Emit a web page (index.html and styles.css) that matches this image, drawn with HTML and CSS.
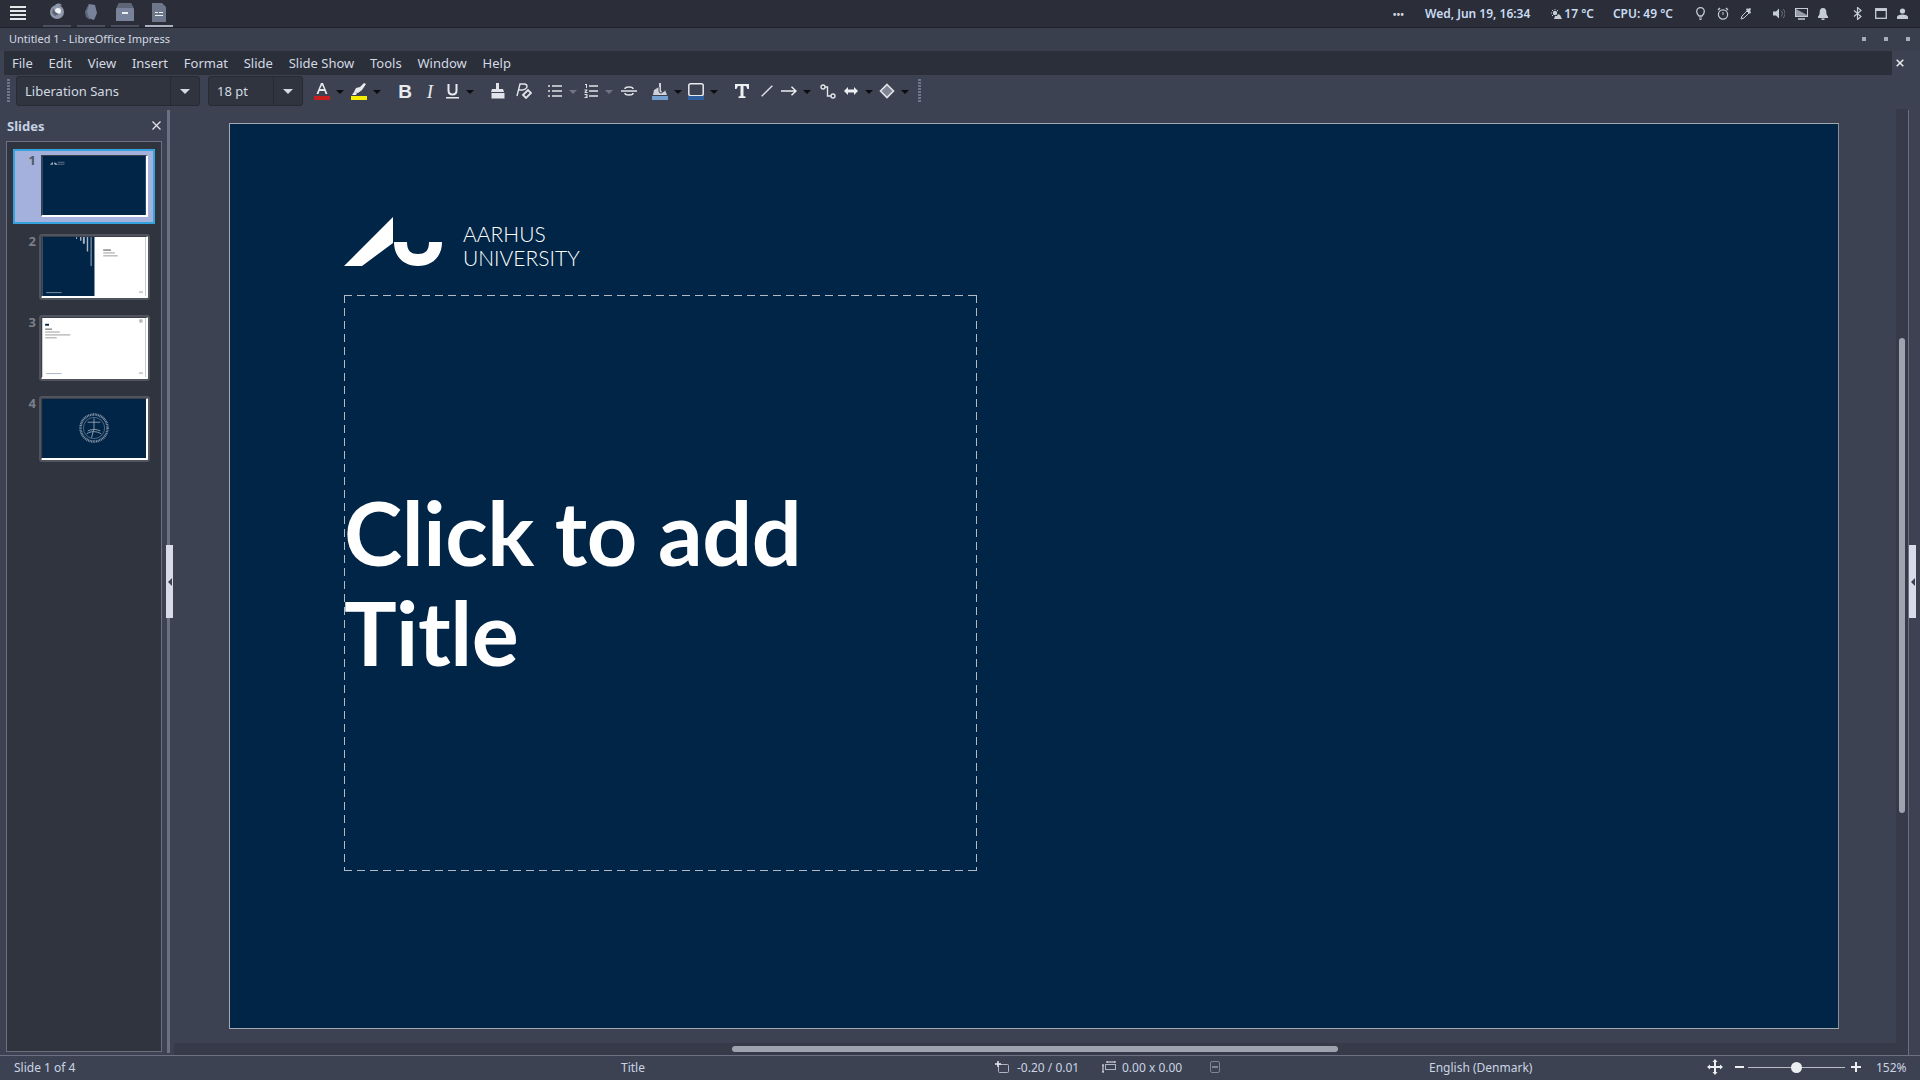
FILE: index.html
```html
<!DOCTYPE html>
<html lang="en">
<head>
    <meta charset="UTF-8">
    <title>Untitled 1 - LibreOffice Impress</title>
    <link rel="stylesheet" href="styles.css">
</head>
<body>
    <header class="topbar">
        <svg class="burger" width="16" height="14" viewBox="0 0 16 14"><path d="M0 1h16M0 5h16M0 9h16M0 13h16" stroke="#e4e6ea" stroke-width="2"/></svg>
        <div class="task">
            <svg width="16" height="16" viewBox="0 0 16 16"><circle cx="8" cy="9" r="7" fill="#8f98ab"/><path d="M6 2c3-2 6-2 7 1-2-1-3 0-4 1z" fill="#8f98ab"/><circle cx="9" cy="8" r="3" fill="#f2f3f5"/><path d="M4 5c1 3 3 5 6 6l-4 2-3-3z" fill="#5d6577"/></svg>
        </div>
        <div class="task">
            <svg width="14" height="18" viewBox="0 0 14 18"><path d="M5 1l6 1 2 8-3 7-6-2-3-6z" fill="#78829a"/><path d="M5 1L3 9l3 8-4-3-1-4z" fill="#5d6577"/></svg>
        </div>
        <div class="task">
            <svg width="18" height="18" viewBox="0 0 18 18"><path d="M3 0h12l3 6v12H0V6z" fill="#78829a"/><path d="M3 0h12l2 5H1z" fill="#5d6577"/><rect x="6" y="9" width="6" height="2" fill="#eceef1"/></svg>
        </div>
        <div class="task task-active">
            <svg width="14" height="19" viewBox="0 0 14 19"><path d="M0 0h10l4 4v15H0z" fill="#6d768b"/><rect x="3" y="9" width="3" height="1" fill="#eceef1"/><rect x="3" y="12" width="8" height="1" fill="#eceef1"/><rect x="7" y="9" width="4" height="1" fill="#eceef1"/></svg>
        </div>
        <div class="tray">
            <span class="tray-dots">&#8226;&#8226;&#8226;</span>
            <span class="tray-date">Wed, Jun 19, 16:34</span>
            <span class="tray-temp">
                <svg width="11" height="10" viewBox="0 0 11 10"><circle cx="4" cy="4" r="2.200" fill="#c5ccd8"/><path d="M4 0v1M0 4h1M1 1l1 1M7 1L6 2M1 7l1-1" stroke="#c5ccd8"/><path d="M3 10l1-3h2l1-2 2 1 2 4z" fill="#c5ccd8"/></svg>17 °C
            </span>
            <span class="tray-cpu">CPU: 49 °C</span>
            <svg class="tray-bulb" width="9" height="13" viewBox="0 0 9 13"><path d="M3 9C1 7 .7 6 .7 4.500a3.800 3.800 0 0 1 7.600 0C8.300 6 8 7 6 9z" fill="none" stroke="#c5ccd8" stroke-width="1.300"/><path d="M3 11h3M3.500 12.500h2" stroke="#c5ccd8"/></svg>
            <svg class="tray-alarm" width="12" height="13" viewBox="0 0 12 13"><circle cx="6" cy="7.500" r="4.600" fill="none" stroke="#c5ccd8" stroke-width="1.200"/><path d="M1 3l2-2M11 3L9 1" stroke="#c5ccd8" stroke-width="1.400"/><path d="M6 5v3" stroke="#c5ccd8"/></svg>
            <svg class="tray-dropper" width="12" height="12" viewBox="0 0 12 12"><path d="M1 11l1-3 5-5 2 2-5 5z" fill="none" stroke="#c5ccd8"/><path d="M6 2l4 4 1-2-1-1 1-2-1-1-2 1-1-1z" fill="#c5ccd8"/></svg>
            <svg class="tray-speaker" width="12" height="11" viewBox="0 0 12 11"><path d="M0 3.500h3L6 .5v10l-3-3H0z" fill="#c5ccd8"/><path d="M8 2.500a4 4 0 0 1 0 6M10 1a6 6 0 0 1 0 9" fill="none" stroke="#6b7280"/></svg>
            <svg class="tray-screen" width="13" height="12" viewBox="0 0 13 12"><rect x=".5" y=".5" width="12" height="8" fill="none" stroke="#c5ccd8"/><path d="M1 1l11 6v1H1z" fill="#c5ccd8" opacity=".7"/><path d="M3 11h7" stroke="#c5ccd8" stroke-width="1.500"/></svg>
            <svg class="tray-bell" width="10" height="12" viewBox="0 0 10 12"><path d="M5 0c2.500 0 3.300 2 3.300 4 0 2.500.7 3.500 1.700 4.500V10H0V8.500C1 7.500 1.700 6.500 1.700 4 1.700 2 2.500 0 5 0z" fill="#c5ccd8"/><rect x="3.500" y="10.500" width="3" height="1.500" fill="#c5ccd8"/></svg>
            <svg class="tray-bt" width="9" height="13" viewBox="0 0 9 13"><path d="M1 3.500l7 6-3.500 3V.5L8 3.500l-7 6" fill="none" stroke="#c5ccd8" stroke-width="1.200"/></svg>
            <svg class="tray-window" width="12" height="11" viewBox="0 0 12 11"><rect x=".7" y=".7" width="10.600" height="9.600" fill="none" stroke="#c5ccd8" stroke-width="1.300"/><rect x="1" y="1" width="10" height="2" fill="#c5ccd8"/></svg>
            <svg class="tray-user" width="11" height="11" viewBox="0 0 11 11"><circle cx="5.500" cy="3" r="2.600" fill="#c5ccd8"/><path d="M0 11V9c0-1.500 2.500-2.500 5.500-2.500S11 7.500 11 9v2z" fill="#c5ccd8"/></svg>
        </div>
    </header>

    <div class="titlebar">
        <span class="title-text">Untitled 1 - LibreOffice Impress</span>
        <i class="win-dot"></i>
        <i class="win-dot"></i>
        <i class="win-dot"></i>
    </div>

    <div class="menurow">
        <nav class="menubar">
            <span>File</span>
            <span>Edit</span>
            <span>View</span>
            <span>Insert</span>
            <span>Format</span>
            <span>Slide</span>
            <span>Slide Show</span>
            <span>Tools</span>
            <span>Window</span>
            <span>Help</span>
        </nav>
        <svg class="menu-close" width="8" height="8" viewBox="0 0 8 8"><path d="M.7.7l6.600 6.600M7.300.7L.7 7.300" stroke="#e4e6ea" stroke-width="1.600"/></svg>
    </div>

    <div class="toolbar">
        <i class="grip"></i>
        <div class="combo combo-font"><span class="combo-value">Liberation Sans</span><span class="combo-arrow"></span></div>
        <div class="combo combo-size"><span class="combo-value">18 pt</span><span class="combo-arrow"></span></div>

        <span class="tool ml-8">
            <svg width="16" height="19" viewBox="0 0 16 19"><path d="M2.500 12L7 1h2l4.500 11h-2l-1-3h-5l-1 3zM6 7h4L8 3z" fill="#e8eaee"/><rect y="14" width="16" height="4" fill="#c5201f"/></svg>
        </span>
        <span class="drop"></span>
        <span class="tool ml-1">
            <svg width="16" height="19" viewBox="0 0 16 19"><path d="M3 10l2-4 4-1 2 3-4 3zM9 5l4-4 2 1-4 6zM1 13l2-3 3 1-1 2z" fill="#e8eaee"/><rect y="14" width="16" height="4" fill="#f5ee00"/></svg>
        </span>
        <span class="drop"></span>

        <span class="tool ml-10"><b class="glyph glyph-b">B</b></span>
        <span class="tool ml-3"><i class="glyph glyph-i">I</i></span>
        <span class="tool">
            <svg width="13" height="16" viewBox="0 0 13 16"><path d="M2.500 1v6.500c0 2.500 1.500 4 4 4s4-1.500 4-4V1" fill="none" stroke="#e8eaee" stroke-width="2"/><rect x="0" y="14" width="13" height="1.500" fill="#e8eaee"/></svg>
        </span>
        <span class="drop"></span>

        <span class="tool ml-10">
            <svg width="14" height="16" viewBox="0 0 14 16"><path d="M5 0h3v6h4l1 3H0l1-3h4zM.5 10h13v5.500H.5z" fill="#e2e4e9"/></svg>
        </span>
        <span class="tool ml-4">
            <svg width="16" height="16" viewBox="0 0 16 16"><path d="M1 13L4 1h4c2 0 3 1 3 2.500S9 7 6 7H3" fill="none" stroke="#e2e4e9" stroke-width="1.400"/><path d="M7 12l5-5 3 3-5 5z" fill="none" stroke="#e2e4e9" stroke-width="1.800"/></svg>
        </span>

        <span class="tool ml-9">
            <svg width="14" height="12" viewBox="0 0 14 12"><path d="M0 1h2M0 6h2M0 11h2M4 1h10M4 6h10M4 11h10" stroke="#e2e4e9" stroke-width="1.600"/></svg>
        </span>
        <span class="drop drop-off"></span>
        <span class="tool">
            <svg width="14" height="14" viewBox="0 0 14 14"><path d="M5 2h9M5 7h9M5 12h9" stroke="#e2e4e9" stroke-width="1.600"/><path d="M1 0h2v4H2V1H1zM.5 5.500h3v.8L2 8h1.500v1h-3v-.8L2 6.500H.5zM.5 10h3v4h-3v-1h2v-.5h-1v-.8h1v-.7h-2z" fill="#e2e4e9"/></svg>
        </span>
        <span class="drop drop-off"></span>
        <span class="tool ml-2">
            <svg width="16" height="10" viewBox="0 0 16 10"><path d="M0 5h16" stroke="#e2e4e9" stroke-width="1.500"/><path d="M4 3c0-1.500 2-2 4-2s4 .5 4 2M4 7c0 1.500 2 2 4 2s4-.5 4-2" fill="none" stroke="#e2e4e9" stroke-width="1.600"/></svg>
        </span>

        <span class="tool ml-9">
            <svg width="16" height="17" viewBox="0 0 16 17"><path d="M2 7l5-3v-4h2v7a2 2 0 0 0 4 0l2 5H1z" fill="#cfd2d9"/><path d="M7 4v4a2 2 0 0 0 4 0" fill="none" stroke="#3d4252"/><rect y="13" width="16" height="4" fill="#729fcf"/></svg>
        </span>
        <span class="drop"></span>
        <span class="tool">
            <svg width="16" height="17" viewBox="0 0 16 17"><rect x=".8" y=".8" width="14.400" height="12" rx="2" fill="none" stroke="#e8eaee" stroke-width="1.500"/><rect y="13" width="16" height="4" fill="#2f5f9f"/></svg>
        </span>
        <span class="drop"></span>

        <span class="tool ml-10">
            <svg width="14" height="14" viewBox="0 0 14 14"><path d="M0 0h14v5h-1.500L11 2H8.500v10l2 .5V14h-7v-1.500l2-.5V2H3L1.500 5H0z" fill="#eceef1"/></svg>
        </span>
        <span class="tool ml-3">
            <svg width="12" height="12" viewBox="0 0 12 12"><path d="M.7 11.300L11.300.7" stroke="#e2e4e9" stroke-width="1.400"/></svg>
        </span>
        <span class="tool">
            <svg width="16" height="10" viewBox="0 0 16 10"><path d="M0 5h15M10.500.7L15 5l-4.500 4.300" fill="none" stroke="#eceef1" stroke-width="1.500"/></svg>
        </span>
        <span class="drop"></span>
        <span class="tool ml-3">
            <svg width="16" height="15" viewBox="0 0 16 15"><path d="M3 3h4.500v9H12" fill="none" stroke="#e2e4e9" stroke-width="1.400"/><circle cx="3" cy="3" r="2" fill="#3d4252" stroke="#e2e4e9" stroke-width="1.400"/><circle cx="13" cy="12" r="2" fill="#3d4252" stroke="#e2e4e9" stroke-width="1.400"/></svg>
        </span>
        <span class="tool ml-1">
            <svg width="14" height="8" viewBox="0 0 14 8"><path d="M0 4l4-4v2.500h6V0l4 4-4 4V5.500H4V8z" fill="#eceef1"/></svg>
        </span>
        <span class="drop"></span>
        <span class="tool">
            <svg width="16" height="16" viewBox="0 0 16 16"><path d="M8 1.500L14.500 8 8 14.500 1.500 8z" fill="#7d8494" stroke="#e2e4e9" stroke-width="1.600"/></svg>
        </span>
        <span class="drop"></span>
        <i class="grip ml-6"></i>
    </div>

    <div class="workspace">
        <aside class="sidebar">
            <div class="sidebar-head">
                <span>Slides</span>
                <svg width="9" height="9" viewBox="0 0 9 9"><path d="M.5.5l8 8M8.500.5l-8 8" stroke="#e4e6ea" stroke-width="1.200"/></svg>
            </div>
            <div class="slide-list">
                <div class="thumb-row thumb-row-active">
                    <span class="thumb-num">1</span>
                    <svg class="thumb" viewBox="0 0 107 61"><rect width="107" height="61" fill="#002546"/><path d="M8 9l3-3v3zM12 7h2l2 2h-3z" fill="#aab4c4"/><rect x="16" y="6" width="7" height="1" fill="#5f7088"/><rect x="16" y="8" width="7" height="1" fill="#5f7088"/></svg>
                </div>
                <div class="thumb-row">
                    <span class="thumb-num">2</span>
                    <svg class="thumb" viewBox="0 0 107 61"><rect width="107" height="61" fill="#fff"/><rect width="54" height="61" fill="#002546"/><path d="M35 0h1v2h-1zM39 0h1.500v4H39zM42 0h2v7h-2zM46 0h1.500v15H46zM50 0h1v30h-1z" fill="#a8b4c4"/><rect x="63" y="13" width="8" height="1" fill="#444"/><rect x="63" y="16" width="12" height="1" fill="#999"/><rect x="63" y="19" width="15" height="1" fill="#999"/><rect x="4" y="57" width="16" height="1" fill="#7f8ea3"/><rect x="100" y="56" width="4" height="2" fill="#ccc"/></svg>
                </div>
                <div class="thumb-row">
                    <span class="thumb-num">3</span>
                    <svg class="thumb" viewBox="0 0 107 61"><rect width="107" height="61" fill="#fff"/><rect x="3" y="6" width="4" height="2" fill="#002546"/><rect x="3" y="11" width="7" height="1" fill="#555"/><rect x="3" y="14" width="15" height="1" fill="#999"/><rect x="3" y="17" width="26" height="1" fill="#999"/><rect x="3" y="20" width="12" height="1" fill="#999"/><circle cx="102" cy="3" r="2" fill="#b5b9c0"/><rect x="4" y="57" width="16" height="1" fill="#a8b4c4"/><rect x="100" y="56" width="4" height="2" fill="#ccc"/></svg>
                </div>
                <div class="thumb-row">
                    <span class="thumb-num">4</span>
                    <svg class="thumb" viewBox="0 0 107 61"><rect width="107" height="61" fill="#002546"/><g fill="none" stroke="#8a99ad"><circle cx="53.500" cy="30" r="14" stroke-width="2.500" stroke-dasharray="1 .7"/><circle cx="53.500" cy="30" r="11" stroke-width=".6"/><path d="M53.500 20v12M47 24h13M46 36c4-3 10-3 15 0M47 33c4-2 9-2 13 0M53 32l-2 8" stroke-width="1"/></g></svg>
                </div>
            </div>
        </aside>
        <div class="split">
            <div class="handle"><span class="handle-arrow"></span></div>
        </div>
        <div class="canvas">
            <div class="canvas-view">
                <section class="slide">
                    <div class="logo">
                        <svg width="99" height="49" viewBox="0 0 99 49"><path d="M0 49L49 0v26L18 49zM50 25h13c0 9 4 12 11 12s11-3 11-12h13c0 15-10 24-24 24S50 40 50 25z" fill="#fff"/></svg>
                        <div class="logo-text">AARHUS<br>UNIVERSITY</div>
                    </div>
                    <div class="title-box">
                        <h1 class="title-ph">Click to add<br>Title</h1>
                    </div>
                </section>
            </div>
            <div class="hscroll"><span class="hscroll-thumb"></span></div>
        </div>
        <div class="vscroll"><span class="vscroll-thumb"></span></div>
        <div class="deck">
            <div class="handle handle-deck"><span class="handle-arrow"></span></div>
        </div>
    </div>

    <footer class="statusbar">
        <span class="st-slide">Slide 1 of 4</span>
        <span class="st-layout">Title</span>
        <svg class="st-pos-icon" width="14" height="12" viewBox="0 0 14 12"><rect x="3.500" y="3.500" width="10" height="8" rx="1" fill="none" stroke="#aeb4c0"/><path d="M3 0v6M0 3h6" stroke="#eceef1" stroke-width="1.400"/></svg>
        <span class="st-pos">-0.20 / 0.01</span>
        <svg class="st-size-icon" width="14" height="12" viewBox="0 0 14 12"><rect x="3.500" y="3.500" width="10" height="5" fill="none" stroke="#aeb4c0"/><path d="M5 1h8M5 0v2M13 0v2M1 4v7M0 4h2M0 11h2" stroke="#eceef1"/></svg>
        <span class="st-size">0.00 x 0.00</span>
        <svg class="st-save" width="10" height="12" viewBox="0 0 10 12"><rect x=".5" y=".5" width="9" height="11" rx="1.500" fill="none" stroke="#7d8494"/><rect x="2" y="5" width="6" height="2" fill="#7d8494"/></svg>
        <span class="st-lang">English (Denmark)</span>
        <svg class="st-move" width="16" height="16" viewBox="0 0 16 16"><path d="M8 0l2.500 3H9v4h4V5.500L16 8l-3 2.500V9H9v4h1.500L8 16l-2.500-3H7V9H3v1.500L0 8l3-2.500V7h4V3H5.500z" fill="#eceef1"/></svg>
        <span class="zoom-minus"></span>
        <div class="zoom-track"><span class="zoom-thumb"></span></div>
        <svg class="zoom-plus" width="10" height="10" viewBox="0 0 10 10"><path d="M0 5h10M5 0v10" stroke="#eceef1" stroke-width="2"/></svg>
        <span class="st-zoom">152%</span>
    </footer>
</body>
</html>
```

FILE: styles.css
```css
* { box-sizing: border-box; }
html, body { margin: 0; height: 100%; }
body {
    width: 1920px;
    height: 1080px;
    overflow: hidden;
    display: flex;
    flex-direction: column;
    background: #3d4252;
    color: #d3dae3;
    font-family: "Noto Sans", sans-serif;
    font-size: 12px;
}

/* desktop panel */
.topbar { height: 28px; flex: none; display: flex; align-items: flex-start; background: #2b2e39; border-bottom: 1px solid #1f2229; }
.burger { margin: 6px 0 0 10px; }
.task { width: 28px; height: 27px; margin-left: 6px; display: flex; justify-content: center; padding-top: 3px; border-bottom: 2px solid #4a5060; }
.task:first-of-type { margin-left: 17px; }
.task-active { border-bottom-color: #a9b0bf; }
.tray { margin-left: auto; height: 27px; display: flex; align-items: center; color: #c9dcf3; font-size: 12px; font-weight: 600; }
.tray-dots { margin-right: 21px; font-size: 10px; color: #d0d4dc; }
.tray-date { margin-right: 21px; }
.tray-temp { display: flex; align-items: center; gap: 2px; margin-right: 19px; }
.tray-cpu { margin-right: 23px; }
.tray-bulb { margin-right: 12px; }
.tray-alarm { margin-right: 11px; }
.tray-dropper { margin-right: 21px; }
.tray-speaker { margin-right: 10px; }
.tray-screen { margin-right: 10px; }
.tray-bell { margin-right: 25px; }
.tray-bt { margin-right: 13px; }
.tray-window { margin-right: 10px; }
.tray-user { margin-right: 12px; }

/* window title */
.titlebar { height: 23px; flex: none; display: flex; align-items: center; padding: 0 10px 2px 9px; background: #3a3f4d; }
.title-text { margin-right: auto; font-size: 11px; color: #d3dae3; }
.win-dot { width: 4px; height: 4px; margin-left: 18px; background: #a7adba; }

/* menu */
.menurow { height: 24px; flex: none; display: flex; align-items: center; padding-left: 4px; }
.menubar { width: 1888px; height: 24px; display: flex; align-items: center; gap: 15.800px; padding-left: 8px; background: #2b2f3a; font-size: 13px; color: #d3dae3; }
.menu-close { margin-left: 4px; }

/* toolbar */
.toolbar { height: 35px; flex: none; display: flex; align-items: center; padding: 0 0 3px 7px; }
.grip { width: 3px; height: 24px; flex: none; background: repeating-linear-gradient(#70778a 0 2px, transparent 2px 3px); }
.combo { height: 30px; display: flex; align-items: center; background: #2f343f; border: 1px solid #262a33; border-radius: 3px; font-size: 13px; }
.combo-font { width: 184px; margin-left: 6px; }
.combo-size { width: 95px; margin-left: 8px; }
.combo-value { flex: 1; padding-left: 8px; }
.combo-arrow { width: 29px; height: 28px; flex: none; border-left: 1px solid #262a33; position: relative; }
.combo-arrow::after { content: ""; position: absolute; left: 9px; top: 12px; border: 5px solid transparent; border-top-color: #d3dae3; border-bottom: 0; }
.tool { width: 22px; height: 24px; flex: none; display: flex; align-items: center; justify-content: center; }
.drop { width: 14px; height: 24px; flex: none; position: relative; }
.drop::after { content: ""; position: absolute; left: 3px; top: 11px; border: 4px solid transparent; border-top-color: #0b0c10; border-bottom: 0; }
.drop-off::after { border-top-color: #6f7585; }
.glyph { font-family: "Liberation Sans", sans-serif; font-size: 19px; color: #e8eaee; line-height: 1; }
.glyph-b { font-weight: 700; }
.glyph-i { font-family: "Liberation Serif", serif; font-style: italic; }
.ml-1 { margin-left: 1px; }
.ml-2 { margin-left: 2px; }
.ml-3 { margin-left: 3px; }
.ml-4 { margin-left: 4px; }
.ml-6 { margin-left: 6px; }
.ml-8 { margin-left: 8px; }
.ml-9 { margin-left: 9px; }
.ml-10 { margin-left: 10px; }

/* main area */
.workspace { flex: 1; min-height: 0; display: flex; }
.sidebar { width: 167px; flex: none; padding: 0 5px 3px 6px; display: flex; flex-direction: column; }
.sidebar-head { height: 31px; flex: none; display: flex; align-items: center; justify-content: space-between; padding: 0 1px 0 1px; font-weight: 700; font-size: 13px; color: #c5d2e4; }
.slide-list { flex: 1; padding: 7px 6px; background: #2f343f; border: 1px solid #6b7183; display: flex; flex-direction: column; gap: 6px; }
.thumb-row { height: 75px; flex: none; display: flex; justify-content: flex-end; align-items: flex-start; padding: 6px 7px 0 0; }
.thumb-row-active { background: #a3b1dc; border: 2px solid #33a2dd; padding: 4px 5px 0 0; }
.thumb-num { margin: -2px 5px 0 0; font-size: 13px; line-height: 14px; font-weight: 700; color: #7b7f8a; }
.thumb-row-active .thumb-num { color: #55585f; }
.thumb { width: 107px; height: 62px; display: block; border: 1px solid #3c3f47; border-right: 2px solid #fff; border-bottom: 2px solid #fff; outline: 2px solid rgba(120,124,136,.45); border-radius: 1px; }
.thumb-row-active .thumb { outline: 0; }

.split { width: 3px; flex: none; background: #6b7183; position: relative; margin-bottom: 2px; }
.handle { position: absolute; left: -1px; top: 435px; width: 7px; height: 73px; background: #d8dce8; display: flex; align-items: center; justify-content: center; }
.handle-arrow { border: 4px solid transparent; border-right-color: #3d4252; border-left: 0; }

.canvas { flex: 1; min-width: 0; display: flex; flex-direction: column; }
.canvas-view { flex: 1; min-height: 0; padding: 13px 0 0 59px; }
.slide { width: 1610px; height: 906px; background: #002546; border: 1px solid #a5a8ae; border-right-color: #8b9098; padding: 93px 0 0 114px; }
.logo { height: 49px; display: flex; align-items: flex-start; gap: 20px; }
.logo-text { font-family: Lato, sans-serif; font-weight: 300; font-size: 21px; line-height: 24px; color: #fff; padding-top: 5px; }
.title-box {
    width: 633px;
    height: 576px;
    margin-top: 29px;
    padding-bottom: 3px;
    display: flex;
    align-items: center;
    background:
        repeating-linear-gradient(90deg, #b4bac4 0 8px, transparent 8px 13px) top / 100% 1px no-repeat,
        repeating-linear-gradient(90deg, #b4bac4 0 8px, transparent 8px 13px) bottom / 100% 1px no-repeat,
        repeating-linear-gradient(#b4bac4 0 8px, transparent 8px 13px) left / 1px 100% no-repeat,
        repeating-linear-gradient(#b4bac4 0 8px, transparent 8px 13px) right / 1px 100% no-repeat;
}
.title-ph { margin: 0; font-family: Lato, sans-serif; font-weight: 700; font-size: 88px; line-height: 100px; letter-spacing: -.4px; color: #fff; }

.hscroll { height: 12px; flex: none; margin: 3px 0 0 4px; background: #373b49; display: flex; align-items: center; padding-left: 558px; }
.hscroll-thumb { width: 606px; height: 6px; border-radius: 3px; background: #9ea3b0; }
.vscroll { width: 12px; flex: none; margin-top: -1px; padding: 229px 3px 0; background: #373b49; }
.vscroll-thumb { display: block; width: 6px; height: 475px; border-radius: 3px; background: #9ea3b0; }
.deck { width: 12px; flex: none; border-left: 1px solid #6b7183; position: relative; }
.handle-deck { left: 0; width: 7px; }

/* status bar */
.statusbar { height: 25px; flex: none; display: flex; align-items: center; padding-bottom: 2px; border-top: 1px solid #6b7183; font-size: 12px; color: #c9d4e4; }
.statusbar > * { flex: none; }
.st-slide { margin-left: 14px; width: 607px; }
.st-layout { width: 374px; }
.st-pos-icon { margin-right: 8px; }
.st-pos { width: 85px; }
.st-size-icon { margin-right: 6px; }
.st-size { width: 88px; }
.st-save { width: 10px; }
.st-lang { margin-left: 209px; width: 278px; }
.zoom-minus { width: 9px; height: 2px; margin-left: 12px; background: #eceef1; }
.zoom-track { width: 97px; height: 1px; margin-left: 4px; background: #b8bcc6; position: relative; }
.zoom-thumb { position: absolute; left: 43px; top: -5px; width: 11px; height: 11px; border-radius: 50%; background: #eceef1; }
.zoom-plus { margin-left: 6px; }
.st-zoom { margin-left: 15px; }
```
